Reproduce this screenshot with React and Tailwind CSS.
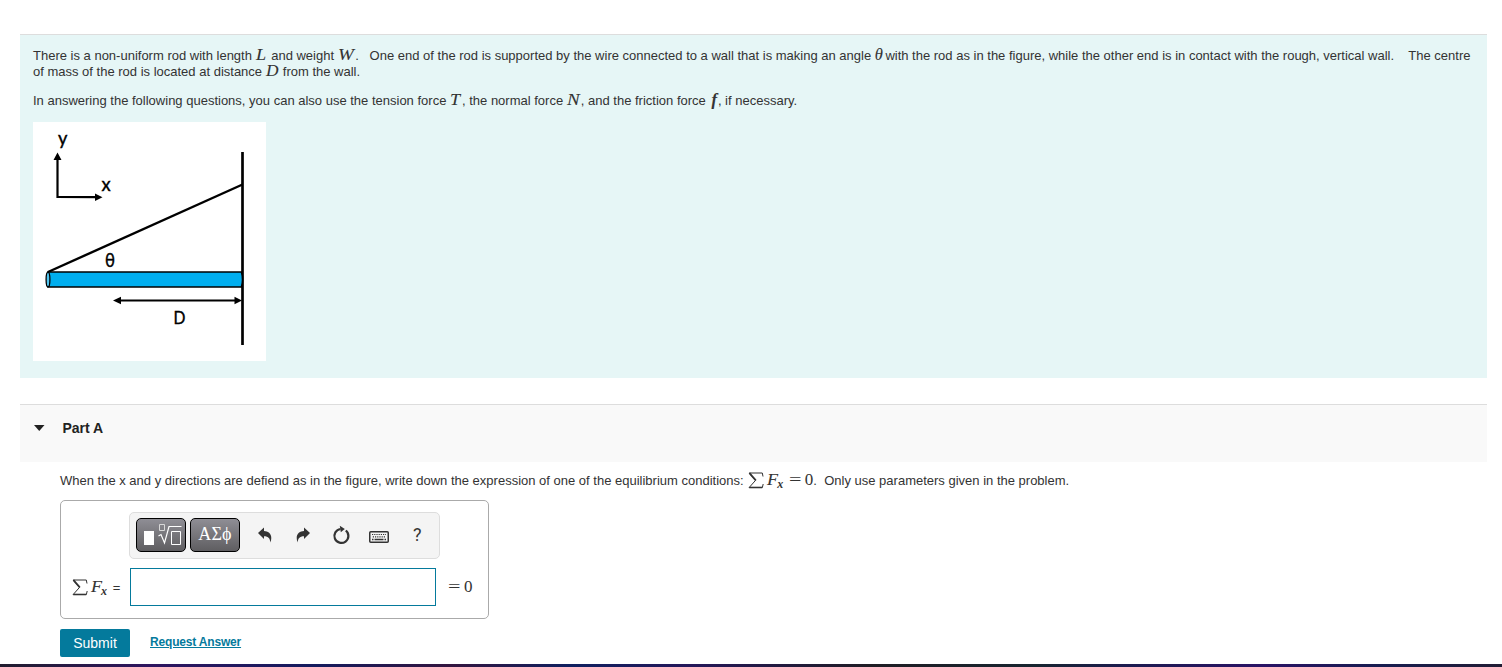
function M({ children, className = '' }) {
  return <span className={`inline-block whitespace-nowrap font-['Liberation_Serif',serif] text-[16.5px] leading-[10px] italic [-webkit-text-stroke:0.1px_#333] ${className}`}>{children}</span>;
}

function SigmaIcon() {
  return (
    <svg width="16" height="17" viewBox="0 0 16 17" fill="none" stroke="#333" className="inline-block align-[-4px]">
      <path d="M15 4.5 14.3 1H1L7.6 8.3 1 15.7H14.3L15.2 12" strokeWidth="1" />
      <path d="M1.5 1.2 7.8 8.3" strokeWidth="1.8" />
      <path d="M1.6 15.4H14.2" strokeWidth="1.4" />
    </svg>
  );
}

function SumFx() {
  return (
    <span className="ml-px inline-block whitespace-nowrap font-['Liberation_Serif',serif] leading-[14px]">
      <SigmaIcon />
      <span className="ml-[3px] inline-block w-[10px] origin-left scale-x-110 text-[16.5px] italic [-webkit-text-stroke:0.1px_#333]">F</span>
      <span className="relative top-[3px] text-[12px] font-bold italic">x</span>
    </span>
  );
}

function EqualsZero({ className = '' }) {
  return (
    <span className={`inline-flex items-baseline font-['Liberation_Serif',serif] text-[17px] leading-[10px] ${className}`}>
      <span className="inline-block w-[16px] origin-left scale-x-130">=</span>
      <span>0</span>
    </span>
  );
}

function RodFigure() {
  return (
    <svg width="233" height="239" viewBox="33 122 233 239" className="block bg-white font-['Lato','Open_Sans',sans-serif]">
      <g stroke="#000" fill="none">
        <path d="M57.5 159V197L97 197.2" strokeWidth="2.2" />
        <path d="M242.5 152V345" strokeWidth="2.7" />
        <path d="M48 272 242.5 184.5" strokeWidth="2.4" />
        <path d="M118 300.5H237" strokeWidth="2.1" />
        <path d="M48 272H241.5Q243.5 279.5 241.5 287H48Z" fill="#00aeef" strokeWidth="1.6" />
        <ellipse cx="48" cy="279.5" rx="1.9" ry="7.4" fill="#4fc4ef" strokeWidth="1.3" />
      </g>
      <path d="M57.5 152.5 61.5 160H53.5ZM102.5 197.2 95 193.5V201ZM113 300.5 121 296.7V304.3ZM242 300.5 234.5 296.7V304.3Z" />
      <g fontSize="19" stroke="#000" strokeWidth="0.4">
        <text transform="translate(58 145) scale(.96 1)">y</text>
        <text transform="translate(101.5 191) scale(.97 1)">x</text>
        <text transform="translate(105 267) scale(.93 1.1)" fontSize="18">θ</text>
        <text transform="translate(173.5 324) scale(.87 1)" fontSize="18">D</text>
      </g>
    </svg>
  );
}

function Toolbar() {
  const dark = 'flex h-[34px] w-[50px] items-center justify-center rounded-[5px] border border-black bg-linear-to-b from-[#8f8e95] to-[#5f5e61] text-white';
  return (
    <div className="ml-[68px] flex h-[47px] w-[311px] items-center rounded-[5px] border border-[#ddd] bg-[#f4f4f4] pb-[2px] pl-[6px]">
      <button className={dark}>
        <svg width="48" height="32" viewBox="0 0 48 32" fill="none" stroke="#fff">
          <path d="M7 12H17V26H7Z" fill="#fff" stroke="none" />
          <path d="M22.5 5.5H27.5V11.5H22.5Z" stroke="#d8d8d8" />
          <path d="M21.5 17 24 15.5 27.5 24 32 7.5H44.5" strokeWidth="1.2" />
          <path d="M34.5 12.5H43.5V25.5H34.5Z" />
        </svg>
      </button>
      <button className={`${dark} ml-1`}>
        <span className="pb-px font-['Liberation_Serif',serif] text-[18px] leading-5 tracking-[0.2px]">ΑΣϕ</span>
      </button>
      <div className="ml-[18px] flex items-center text-[#333]">
        <svg width="14" height="16" viewBox="0 0 14 16" fill="currentColor">
          <path d="M0 6 6 .5V4C11 4.2 15.3 8 12.3 15.5C12.2 11.5 10.5 9.2 6 9.2V12Z" />
        </svg>
        <svg width="14" height="16" viewBox="0 0 14 16" fill="currentColor" className="ml-[24px]">
          <path d="M14 6 8 .5V4C3 4.2 -1.3 8 1.7 15.5C1.8 11.5 3.5 9.2 8 9.2V12Z" />
        </svg>
        <svg width="18" height="20" viewBox="0 0 18 20" fill="none" className="ml-[22px]">
          <path d="M13.8 5.5A7 7 0 1 1 8.5 4" stroke="currentColor" strokeWidth="2.2" />
          <path d="M7.8 .8 12.8 4 8.8 7.2Z" fill="currentColor" />
        </svg>
        <svg width="20" height="12" viewBox="0 0 20 12" fill="none" stroke="currentColor" className="mt-[5px] ml-[19px]">
          <rect x=".75" y=".75" width="18.5" height="10.5" rx="1" strokeWidth="1.5" />
          <path d="M3 3.5H17M3.8 5.8H17" strokeWidth="1.2" strokeDasharray="1.2 1" />
          <path d="M3 8.5H4.5M5.5 8.5H14.5M15.5 8.5H17" strokeWidth="1.3" />
        </svg>
        <span className="ml-[24px] font-[Roboto,sans-serif] text-[18px] leading-5">?</span>
      </div>
    </div>
  );
}

export default function App() {
  return (
    <div className="flex h-[667px] flex-col overflow-hidden bg-white font-['Liberation_Sans',Arial,sans-serif] text-[13px] leading-4 text-[#333]">
      <section className="mt-[34px] mr-[15px] ml-5 h-[344px] border-t border-[#ddd] bg-[#e6f6f6] px-[13px] pt-[13px]">
        <p className="whitespace-nowrap">
          There is a non-uniform rod with length <M className="w-[12px] origin-left scale-x-110">L</M> and weight <M className="w-[17.5px] origin-left scale-x-115">W</M>.&nbsp;&nbsp; One end of the rod is supported by the wire connected to a wall that is making an angle <M className="w-[7px] text-[15px]">θ</M> with the rod as in the figure, while the other end is in contact with the rough, vertical wall.&nbsp;&nbsp;&nbsp; The centre
          <br />
          of mass of the rod is located at distance <M className="w-[13.5px] origin-left scale-x-105">D</M> from the wall.
        </p>
        <p className="mt-[13px] whitespace-nowrap">
          In answering the following questions, you can also use the tension force <M className="w-[12px] origin-left scale-x-110">T</M>, the normal force <M className="w-[14px] origin-left scale-x-115">N</M>, and the friction force <M className="w-[8.5px] pl-[2px] font-bold">f</M>, if necessary.
        </p>
        <div className="mt-[13px]"><RodFigure /></div>
      </section>

      <header className="mt-[26px] mr-[15px] ml-5 flex h-[58px] border-t border-[#ddd] bg-[#f9f9f9] pt-[15px] pl-[14px]">
        <svg width="11" height="6" viewBox="0 0 11 6" className="mt-[5px]"><path d="M0 0H10.5L5.25 6Z" fill="#222" /></svg>
        <h2 className="ml-[17.5px] text-[14px] font-bold text-[#222]">Part A</h2>
      </header>

      <main className="ml-[60px]">
        <p className="mt-[10px] h-[28px] whitespace-nowrap">
          When the x and y directions are defiend as in the figure, write down the expression of one of the equilibrium conditions: <SumFx /> <EqualsZero className="ml-[2px]" />.&nbsp; Only use parameters given in the problem.
        </p>
        <div className="h-[119px] w-[429px] rounded-[5px] border border-[#aaa] pt-[11px]">
          <Toolbar />
          <div className="mt-[9px] flex items-center">
            <div className="w-[69px] pl-[10px] whitespace-nowrap"><SumFx /> <span className="ml-[2px]">=</span></div>
            <input className="h-[38px] w-[306px] border border-[#047a9c] bg-white outline-none" />
            <EqualsZero className="ml-[12px]" />
          </div>
        </div>
        <div className="mt-[10px] flex">
          <button className="h-7 w-[70px] rounded-[2px] bg-[#047a9c] text-[14px] text-white">Submit</button>
          <a href="#" className="mt-[5px] ml-5 text-[12px] font-bold tracking-[-0.18px] text-[#047a9c] underline">Request Answer</a>
        </div>
      </main>
      <footer className="mt-auto h-[3px] bg-[linear-gradient(90deg,#211d2e,#2e1560_10%,#141b5e_21%,#33153f_30%,#0f2060_38%,#24175a_46%,#1f1d24_58%,#172530_69%,#1c1b50_75%,#2a1366_84%,#171d50_92%,#221d35)]" />
    </div>
  );
}
